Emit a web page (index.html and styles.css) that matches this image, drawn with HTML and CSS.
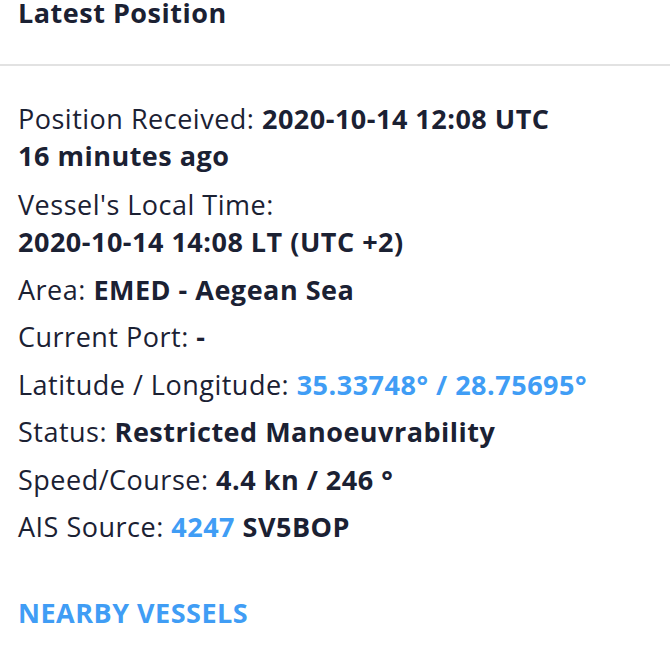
FILE: index.html
```html
<!DOCTYPE html>
<html>
<head>
<meta charset="utf-8">
<link rel="stylesheet" href="styles.css">
</head>
<body>
<div class="panel">
  <div class="header"><h2 class="title">Latest Position</h2></div>
  <div class="content">
    <div class="row">Position Received: <b>2020-10-14 12:08 UTC</b><br><b>16 minutes ago</b></div>
    <div class="row">Vessel's Local Time:<br><b>2020-10-14 14:08 LT (UTC +2)</b></div>
    <div class="row">Area: <b>EMED - Aegean Sea</b></div>
    <div class="row">Current Port: <b>-</b></div>
    <div class="row">Latitude / Longitude: <a class="link">35.33748° / 28.75695°</a></div>
    <div class="row">Status: <b>Restricted Manoeuvrability</b></div>
    <div class="row">Speed/Course: <b>4.4 kn / 246 °</b></div>
    <div class="row">AIS Source: <a class="link">4247</a> <b>SV5BOP</b></div>
    <div class="nearby"><a class="link">NEARBY VESSELS</a></div>
  </div>
</div>
</body>
</html>
```
FILE: styles.css
```css
html, body {
  margin: 0;
  padding: 0;
  background: #ffffff;
}
body {
  font-family: "Open Sans", "Noto Sans", sans-serif;
  color: #1b2133;
  letter-spacing: 0.5px;
}
.panel {
  width: 670px;
}
.header {
  height: 64px;
  border-bottom: 2px solid #e2e2e2;
  padding-left: 18px;
}
.title {
  margin: 0;
  font-size: 27px;
  font-weight: 700;
  line-height: 26px;
}
.content {
  padding: 33.5px 18px 0 18px;
}
.row {
  font-size: 27px;
  line-height: 37.5px;
  margin-bottom: 10px;
}
.row:first-child {
  margin-bottom: 11px;
}
.row b {
  font-weight: 700;
}
.link {
  color: #409df5;
  font-weight: 700;
  text-decoration: none;
}
.nearby {
  margin-top: 48.5px;
  font-size: 27px;
  line-height: 37.5px;
}
```
